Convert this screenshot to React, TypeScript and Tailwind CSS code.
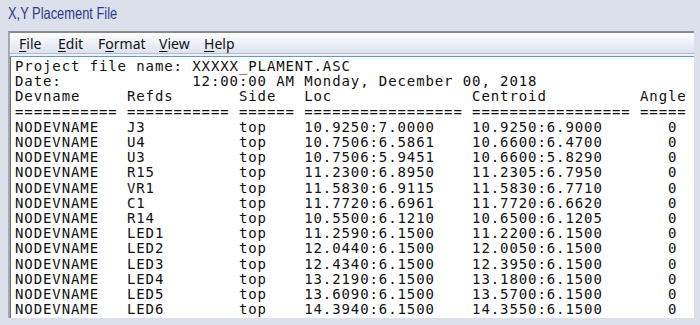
import React from "react";

const rows: [string, string, string, string][] = [
  ["J3", "10.9250:7.0000", "10.9250:6.9000", "0"],
  ["U4", "10.7506:6.5861", "10.6600:6.4700", "0"],
  ["U3", "10.7506:5.9451", "10.6600:5.8290", "0"],
  ["R15", "11.2300:6.8950", "11.2305:6.7950", "0"],
  ["VR1", "11.5830:6.9115", "11.5830:6.7710", "0"],
  ["C1", "11.7720:6.6961", "11.7720:6.6620", "0"],
  ["R14", "10.5500:6.1210", "10.6500:6.1205", "0"],
  ["LED1", "11.2590:6.1500", "11.2200:6.1500", "0"],
  ["LED2", "12.0440:6.1500", "12.0050:6.1500", "0"],
  ["LED3", "12.4340:6.1500", "12.3950:6.1500", "0"],
  ["LED4", "13.2190:6.1500", "13.1800:6.1500", "0"],
  ["LED5", "13.6090:6.1500", "13.5700:6.1500", "0"],
  ["LED6", "14.3940:6.1500", "14.3550:6.1500", "0"],
];

const pad = (s: string, n: number) => s + " ".repeat(Math.max(0, n - s.length));

const lines: string[] = [
  "Project file name: XXXXX_PLAMENT.ASC",
  "Date:              12:00:00 AM Monday, December 00, 2018",
  pad("Devname", 12) + pad("Refds", 12) + pad("Side", 7) + pad("Loc", 18) + pad("Centroid", 18) + "Angle",
  "=========== =========== ====== ================= ================= =====",
  ...rows.map(
    ([r, l, c, a]) =>
      pad("NODEVNAME", 12) + pad(r, 12) + pad("top", 7) + pad(l, 18) + pad(c, 21) + a
  ),
];

function MenuItem({ pre, u, post }: { pre: string; u: string; post: string }) {
  return (
    <span>
      {pre}
      <span className="underline decoration-1 underline-offset-2">{u}</span>
      {post}
    </span>
  );
}

export default function App() {
  return (
    <div className="w-[700px] h-[325px] bg-[#dce0eb] overflow-hidden flex flex-col">
      <div
        className="h-[31px] pl-[8px] pt-[2px] text-[16.5px] leading-[22px] text-[#2c3a8e]"
        style={{ fontFamily: '"Liberation Sans", Arial, sans-serif' }}
      >
        <span className="inline-block origin-left scale-x-[0.78]">X,Y Placement File</span>
      </div>
      <div className="ml-[8px] w-[686px] h-[287px] flex flex-col border-t-2 border-[#8a8a8a] border-l-2 border-l-[#a6a8ae] bg-white">
        <div
          className="h-[20px] flex items-center pl-[8px] text-[14px] text-[#111] bg-gradient-to-b from-[#ffffff] to-[#dde2f1] border-l border-[#f4f5fa]"
          style={{ fontFamily: '"Noto Sans", "Open Sans", sans-serif' }}
        >
          <div className="w-[39px]"><MenuItem pre="" u="F" post="ile" /></div>
          <div className="w-[40px]"><MenuItem pre="" u="E" post="dit" /></div>
          <div className="w-[61px]"><MenuItem pre="F" u="o" post="rmat" /></div>
          <div className="w-[45px]"><MenuItem pre="" u="V" post="iew" /></div>
          <div><MenuItem pre="" u="H" post="elp" /></div>
        </div>
        <div className="h-[1px] bg-[#b9bcc7]" />
        <div className="h-[2px] bg-[#eef0f6]" />
        <div className="h-[1px] bg-[#5b9bd1]" />
        <div className="flex-1 border-l border-[#6e6e6e] pl-[4px] pt-[2px]">
          <pre
            className="m-0 text-[14px] leading-[15.2px] tracking-[0.9px] text-[#111]"
            style={{ fontFamily: '"DejaVu Sans Mono", monospace' }}
          >
            {lines.join("\n")}
          </pre>
        </div>
      </div>
    </div>
  );
}
